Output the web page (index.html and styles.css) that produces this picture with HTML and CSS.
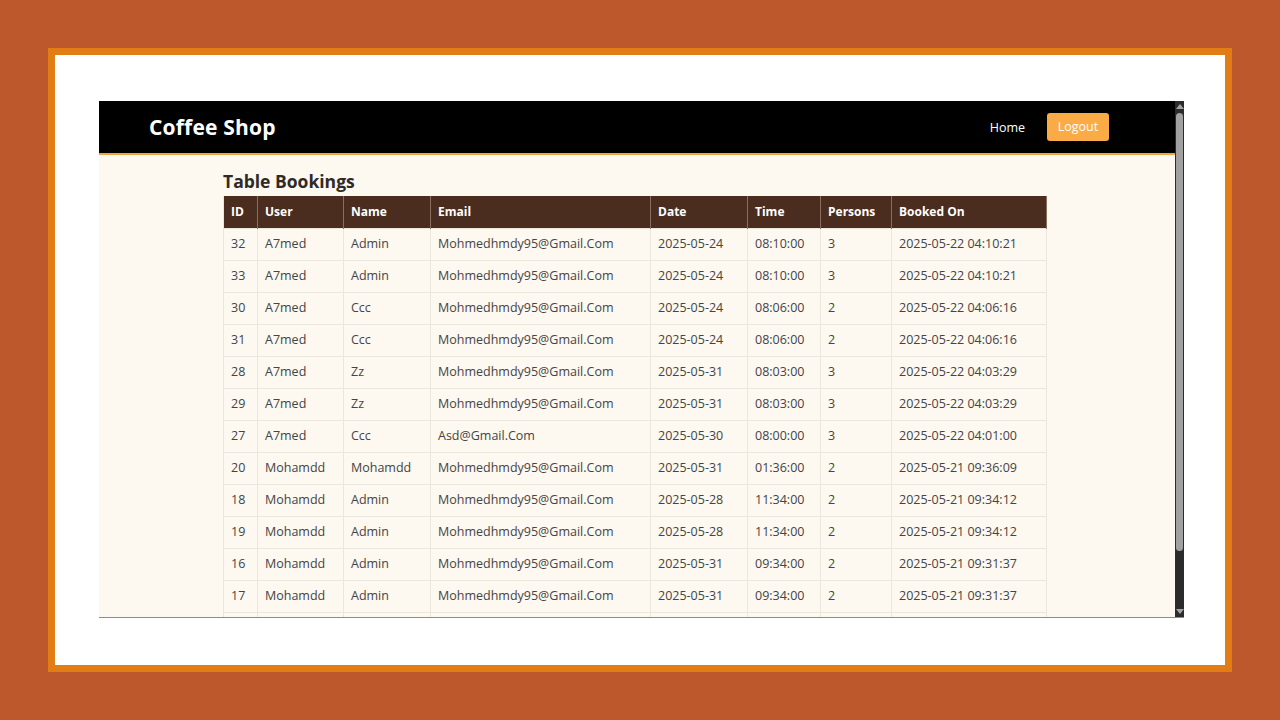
FILE: index.html
```html
<!DOCTYPE html>
<html>
<head>
<meta charset="utf-8">
<link rel="stylesheet" href="styles.css">
</head>
<body>
<div class="slide">
  <div class="frame">
    <div class="viewport">
      <div class="page">
        <header class="nav">
          <div class="brand">Coffee Shop</div>
          <nav class="links">
            <a class="home">Home</a>
            <a class="logout">Logout</a>
          </nav>
        </header>
        <main class="content">
          <h2 class="title">Table Bookings</h2>
          <table class="bookings">
            <colgroup>
              <col class="c-id"><col class="c-user"><col class="c-name"><col class="c-email"><col class="c-date"><col class="c-time"><col class="c-persons"><col class="c-booked">
            </colgroup>
            <thead>
              <tr><th>ID</th><th>User</th><th>Name</th><th>Email</th><th>Date</th><th>Time</th><th>Persons</th><th>Booked On</th></tr>
            </thead>
            <tbody>
              <tr><td>32</td><td>A7med</td><td>Admin</td><td>Mohmedhmdy95@Gmail.Com</td><td>2025-05-24</td><td>08:10:00</td><td>3</td><td>2025-05-22 04:10:21</td></tr>
              <tr><td>33</td><td>A7med</td><td>Admin</td><td>Mohmedhmdy95@Gmail.Com</td><td>2025-05-24</td><td>08:10:00</td><td>3</td><td>2025-05-22 04:10:21</td></tr>
              <tr><td>30</td><td>A7med</td><td>Ccc</td><td>Mohmedhmdy95@Gmail.Com</td><td>2025-05-24</td><td>08:06:00</td><td>2</td><td>2025-05-22 04:06:16</td></tr>
              <tr><td>31</td><td>A7med</td><td>Ccc</td><td>Mohmedhmdy95@Gmail.Com</td><td>2025-05-24</td><td>08:06:00</td><td>2</td><td>2025-05-22 04:06:16</td></tr>
              <tr><td>28</td><td>A7med</td><td>Zz</td><td>Mohmedhmdy95@Gmail.Com</td><td>2025-05-31</td><td>08:03:00</td><td>3</td><td>2025-05-22 04:03:29</td></tr>
              <tr><td>29</td><td>A7med</td><td>Zz</td><td>Mohmedhmdy95@Gmail.Com</td><td>2025-05-31</td><td>08:03:00</td><td>3</td><td>2025-05-22 04:03:29</td></tr>
              <tr><td>27</td><td>A7med</td><td>Ccc</td><td>Asd@Gmail.Com</td><td>2025-05-30</td><td>08:00:00</td><td>3</td><td>2025-05-22 04:01:00</td></tr>
              <tr><td>20</td><td>Mohamdd</td><td>Mohamdd</td><td>Mohmedhmdy95@Gmail.Com</td><td>2025-05-31</td><td>01:36:00</td><td>2</td><td>2025-05-21 09:36:09</td></tr>
              <tr><td>18</td><td>Mohamdd</td><td>Admin</td><td>Mohmedhmdy95@Gmail.Com</td><td>2025-05-28</td><td>11:34:00</td><td>2</td><td>2025-05-21 09:34:12</td></tr>
              <tr><td>19</td><td>Mohamdd</td><td>Admin</td><td>Mohmedhmdy95@Gmail.Com</td><td>2025-05-28</td><td>11:34:00</td><td>2</td><td>2025-05-21 09:34:12</td></tr>
              <tr><td>16</td><td>Mohamdd</td><td>Admin</td><td>Mohmedhmdy95@Gmail.Com</td><td>2025-05-31</td><td>09:34:00</td><td>2</td><td>2025-05-21 09:31:37</td></tr>
              <tr><td>17</td><td>Mohamdd</td><td>Admin</td><td>Mohmedhmdy95@Gmail.Com</td><td>2025-05-31</td><td>09:34:00</td><td>2</td><td>2025-05-21 09:31:37</td></tr>
              <tr><td></td><td></td><td></td><td></td><td></td><td></td><td></td><td></td></tr>
            </tbody>
          </table>
        </main>
      </div>
      <div class="scrollbar">
        <div class="arrow up"></div>
        <div class="track"><div class="thumb"></div></div>
        <div class="arrow down"></div>
      </div>
    </div>
  </div>
</div>
</body>
</html>
```

FILE: styles.css
```css
* { box-sizing: border-box; }
html, body { margin: 0; padding: 0; }
body {
  background: #bd582c;
  font-family: "Open Sans", "Noto Sans", sans-serif;
  width: 1280px;
  height: 720px;
  overflow: hidden;
}
.slide {
  padding: 48px;
}
.frame {
  height: 624px;
  border: 7px solid #e27d16;
  background: #ffffff;
  padding: 46px 41px 47px 44px;
}
.viewport {
  display: flex;
  height: 517px;
  border-bottom: 1px solid #8c8c8c;
  overflow: hidden;
}
.page {
  flex: 1;
  background: #fdf8f0;
  overflow: hidden;
}
.nav {
  height: 54px;
  background: #000;
  border-bottom: 2px solid #f0a542;
  display: flex;
  align-items: center;
  justify-content: space-between;
  padding: 0 66px 0 50px;
}
.brand {
  color: #fff;
  font-size: 21px;
  font-weight: 700;
  letter-spacing: 0.2px;
}
.links {
  display: flex;
  align-items: center;
  gap: 22px;
}
.home {
  color: #fff;
  font-size: 12.5px;
}
.logout {
  display: block;
  width: 62px;
  height: 28px;
  line-height: 28px;
  text-align: center;
  background: #fbab45;
  color: #fff;
  font-size: 12.5px;
  border-radius: 3px;
}
.content {
  padding: 14px 0 0 124px;
}
.title {
  margin: 0 0 3px 0;
  font-size: 17.5px;
  line-height: 24px;
  font-weight: 700;
  color: #2f2a26;
}
.bookings {
  width: 823px;
  border-collapse: collapse;
  table-layout: fixed;
  font-size: 12.5px;
  color: #444;
}
.c-id { width: 34px; }
.c-user { width: 86px; }
.c-name { width: 87px; }
.c-email { width: 220px; }
.c-date { width: 97px; }
.c-time { width: 73px; }
.c-persons { width: 71px; }
.c-booked { width: 155px; }
.bookings th {
  background: #4a2d1e;
  color: #fff;
  font-weight: 700;
  font-size: 12px;
  text-align: left;
  height: 32px;
  padding: 0 7px;
  border: 1px solid #8c6e5e;
  border-top: none;
  border-bottom: none;
}
.bookings td {
  height: 32px;
  padding: 0 7px 2px 7px;
  border: 1px solid #ece6dd;
  white-space: nowrap;
  overflow: hidden;
}
.bookings th:first-child, .bookings td:first-child { border-left: 1px solid #ece6dd; }
.scrollbar {
  width: 9px;
  background: #2b2b2b;
  display: flex;
  flex-direction: column;
  align-items: center;
}
.arrow {
  width: 0;
  height: 0;
  border-left: 4px solid transparent;
  border-right: 4px solid transparent;
}
.arrow.up {
  margin-top: 3px;
  border-bottom: 5px solid #a3a3a3;
}
.arrow.down {
  margin-bottom: 3px;
  border-top: 5px solid #a3a3a3;
}
.track {
  flex: 1;
  width: 100%;
  padding: 4px 1px 0 1px;
}
.thumb {
  height: 438px;
  background: #a1a1a1;
  border-radius: 4px;
}
```
